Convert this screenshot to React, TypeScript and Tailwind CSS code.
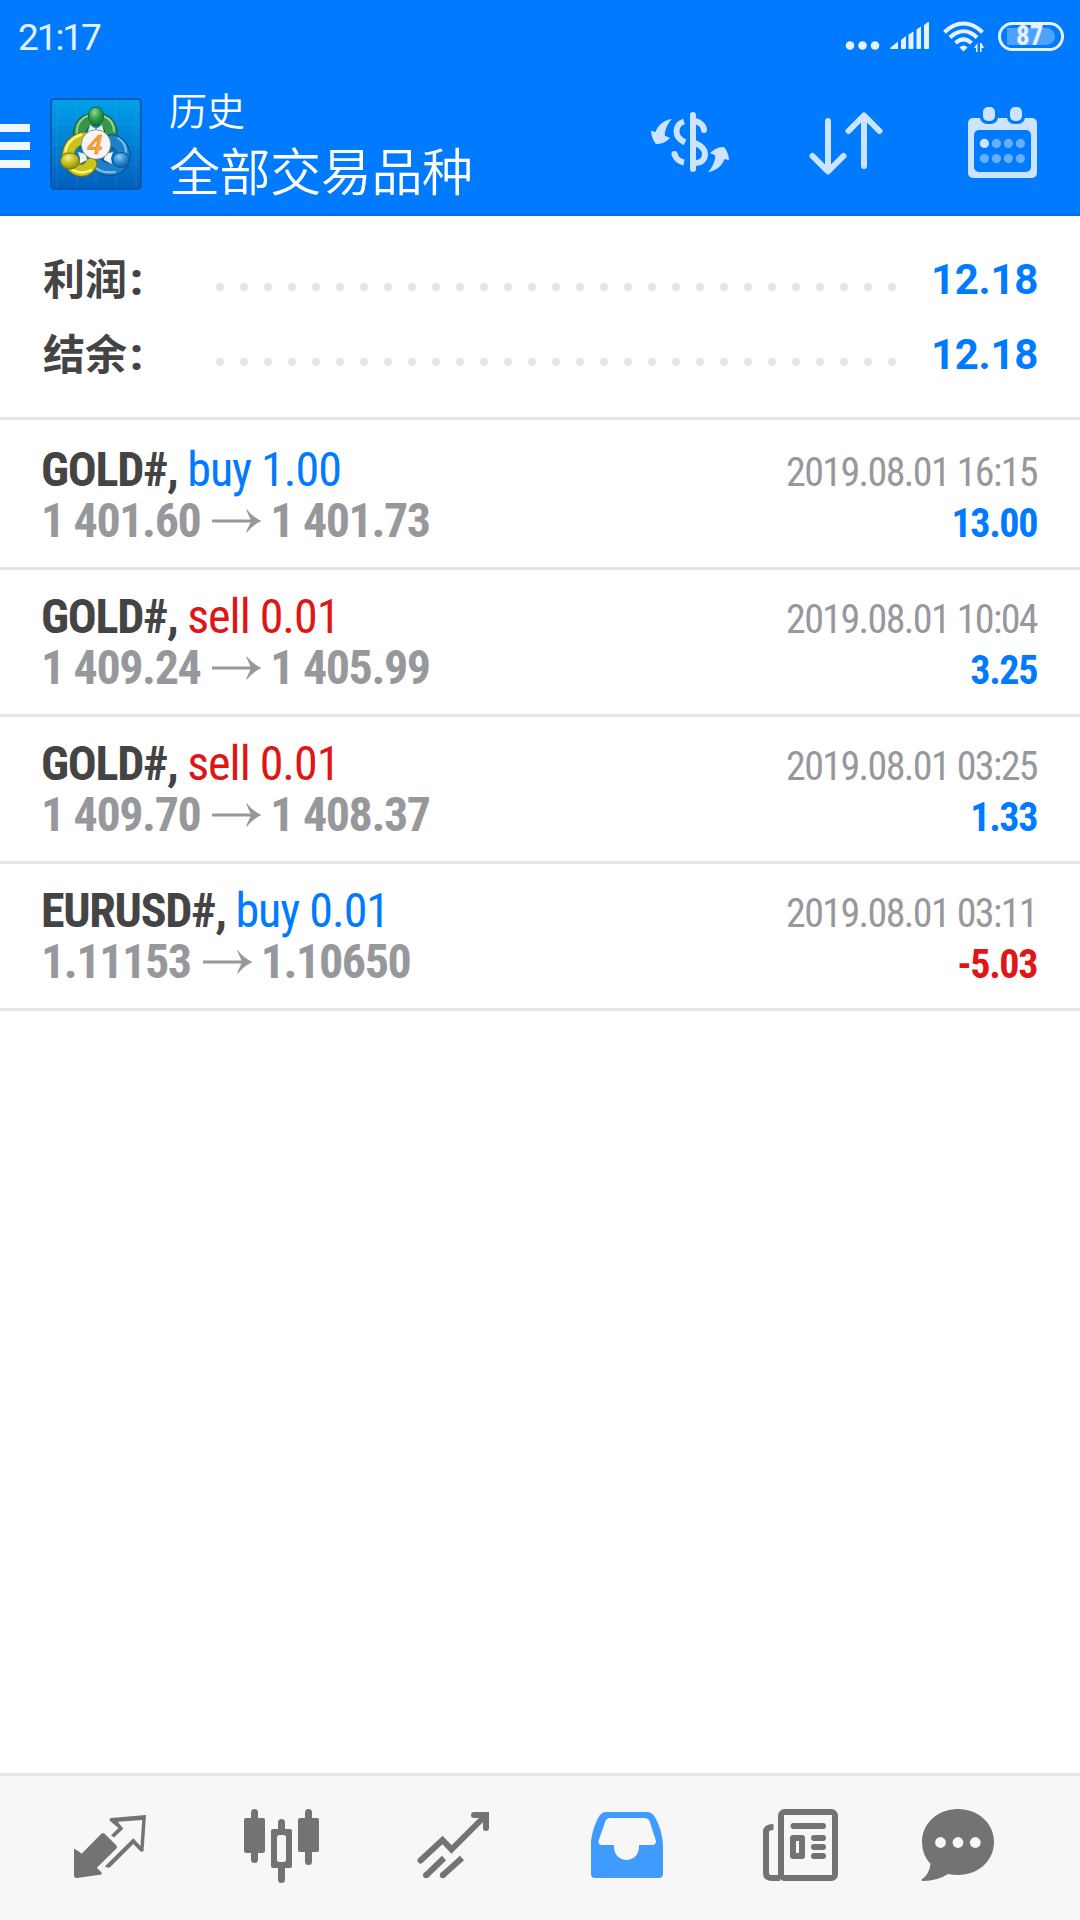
import type { ReactNode } from 'react';

interface Deal {
  symbol: string;
  side: 'buy' | 'sell';
  volume: string;
  open: string;
  close: string;
  time: string;
  profit: string;
}

const summary = [
  { label: '利润', value: '12.18' },
  { label: '结余', value: '12.18' },
];

const deals: Deal[] = [
  { symbol: 'GOLD#', side: 'buy', volume: '1.00', open: '1 401.60', close: '1 401.73', time: '2019.08.01 16:15', profit: '13.00' },
  { symbol: 'GOLD#', side: 'sell', volume: '0.01', open: '1 409.24', close: '1 405.99', time: '2019.08.01 10:04', profit: '3.25' },
  { symbol: 'GOLD#', side: 'sell', volume: '0.01', open: '1 409.70', close: '1 408.37', time: '2019.08.01 03:25', profit: '1.33' },
  { symbol: 'EURUSD#', side: 'buy', volume: '0.01', open: '1.11153', close: '1.10650', time: '2019.08.01 03:11', profit: '-5.03' },
];

function Icon({ children, className = '' }: { children: ReactNode; className?: string }) {
  return (
    <svg viewBox="0 0 100 100" className={`w-[100px] h-[100px] shrink-0 ${className}`}>
      {children}
    </svg>
  );
}

function StatusBar() {
  return (
    <div className="h-[72px] flex items-center justify-between pl-[18px] pr-4 text-[#e5f1ff]">
      <span className="text-[37px] leading-[70px] tracking-[-2.1px] pt-1">21:17</span>
      <div className="flex items-center">
        <svg viewBox="0 0 146 32" className="w-[146px] h-8" fill="currentColor">
          <circle cx="7" cy="25.5" r="4.3" />
          <circle cx="19.5" cy="25.5" r="4.3" />
          <circle cx="32" cy="25.5" r="4.3" />
          {/* signal */}
          <path d="M47 28l8-6.5v7.5h-7q-1 0-1-1zM58 20l5-4v12q0 1-1 1h-3q-1 0-1-1zM65.500 14.500l5-3v16.500q0 1-1 1h-3q-1 0-1-1zM73.500 9.500l4.500-3v21.500q0 1-1 1h-2.500q-1 0-1-1zM81 5l4-3q1-.6 1 .7v25.300q0 1-1 1h-3q-1 0-1-1z" />
          {/* wifi */}
          <g fill="none" stroke="currentColor" strokeWidth="4">
            <path d="M101.500 12.300C113.500 .700 127.500 .700 139.500 12.300" />
            <path d="M107 17.500C115.500 9.300 125.500 9.300 134 17.500" />
            <path d="M112.500 23C118 18 123 18 128.500 23" />
          </g>
          <path d="M116.500 27.500q4-4 8 0l-4 4z" />
          <path d="M134.500 32v-9l-3.500 5h2v4zM137 23v9h1.500v-4h2.500l-2.500-5z" />
        </svg>
        <div className="ml-[9px] w-[66px] h-[29px] rounded-full border-[3px] border-[#e5f1ff] flex items-center justify-center">
          <div className="w-12 h-[17px] rounded-l-sm rounded-r-full bg-[#4ca3ff] flex items-center pl-[9px] font-['Roboto_Condensed','Roboto',sans-serif] text-[27px] font-bold leading-none">
            87
          </div>
        </div>
      </div>
    </div>
  );
}

function AppLogo() {
  return (
    <svg viewBox="0 0 92 92" className="w-[92px] h-[92px]">
      <defs>
        <linearGradient id="tile" x1="0" y1="0" x2="0" y2="1">
          <stop offset="0" stopColor="#00a0ea" />
          <stop offset="1" stopColor="#005fbd" />
        </linearGradient>
        <radialGradient id="green" cx=".4" cy=".3" r=".8">
          <stop offset="0" stopColor="#8fd48f" />
          <stop offset=".5" stopColor="#2f9a4c" />
          <stop offset="1" stopColor="#14702f" />
        </radialGradient>
        <radialGradient id="yellow" cx=".4" cy=".3" r=".8">
          <stop offset="0" stopColor="#f4f08a" />
          <stop offset=".5" stopColor="#c3bb1c" />
          <stop offset="1" stopColor="#7d7d10" />
        </radialGradient>
        <radialGradient id="blue" cx=".4" cy=".3" r=".8">
          <stop offset="0" stopColor="#8ccbf5" />
          <stop offset=".5" stopColor="#2a86cf" />
          <stop offset="1" stopColor="#0a55a0" />
        </radialGradient>
      </defs>
      <rect x="1" y="1" width="90" height="90" rx="3.500" fill="url(#tile)" stroke="#0a4f9c" strokeWidth="1.500" />
      <path d="M7 2v88M27 2v88M46 2v88M66 2v88M86 2v88M2 26h88M2 46h88M2 66h88" stroke="#fff" strokeOpacity=".08" />
      {/* bodies */}
      <g fill="none" strokeLinecap="round">
        <path d="M31 43C26 27 36 21.500 46 21.500S65 27 59 46" stroke="#125c2a" strokeWidth="13.500" />
        <path d="M31 43C26 27 36 21.500 46 21.500S65 27 59 46" stroke="#37964a" strokeWidth="11.500" />
        <path d="M27 36C26 24 34 18 40 17.500M53 18Q64 22 64 33" stroke="#97cf95" strokeWidth="2" />
        <path d="M62 43C75 46 76 61 70 67S49 73 43 61" stroke="#084b92" strokeWidth="14" />
        <path d="M62 43C75 46 76 61 70 67S49 73 43 61" stroke="#1f80ca" strokeWidth="12" />
        <path d="M42 67Q51 76 65 74M68 40Q76 45 76 54" stroke="#7cc3f2" strokeWidth="2" />
        <path d="M34 40C19 43 15 57 21 66S37 74 41 66" stroke="#747000" strokeWidth="13" />
        <path d="M34 40C19 43 15 57 21 66S37 74 41 66" stroke="#cbc31d" strokeWidth="11" />
        <path d="M31 36.500Q17 42 15.500 53M23 72Q32 77 41 72" stroke="#fbf57e" strokeWidth="2.500" />
      </g>
      <path d="M40 27l6 4 6-4 2 7H38zM28 54l8 2 1 6-8 4 1-6zM63 54l-8 2-1 6 8 4-1-6z" fill="#eef4ee" />
      {/* heads */}
      <ellipse cx="46" cy="18" rx="7.500" ry="9" fill="url(#green)" stroke="#12662b" />
      <ellipse cx="20" cy="63" rx="9.500" ry="8" fill="url(#yellow)" stroke="#777410" />
      <ellipse cx="71" cy="62" rx="8.500" ry="7.500" fill="url(#blue)" stroke="#0a559f" />
      <circle cx="46" cy="46.500" r="14.800" fill="#f6f6f8" stroke="#666" strokeWidth=".7" />
      <text x="45" y="56" textAnchor="middle" fontSize="27" fontFamily="Open Sans, sans-serif" fontStyle="italic" fontWeight="600" fill="#fba62c" stroke="#e8702e" strokeWidth=".5">
        4
      </text>
    </svg>
  );
}

function Toolbar() {
  return (
    <div className="h-[144px] flex items-start border-b-[3px] border-[#0070e8]">
      <div className="w-[30px] mt-[52px] flex flex-col gap-[10px]">
        <div className="h-2 bg-[#f0f7ff]" />
        <div className="h-2 bg-[#f0f7ff]" />
        <div className="h-2 bg-[#f0f7ff]" />
      </div>
      <div className="ml-5 mt-[26px]">
        <AppLogo />
      </div>
      <div className="ml-[27px] mt-[15px] flex-1 text-white font-[350]">
        <div className="text-[38px] leading-[50px]">历史</div>
        <div className="text-[51px] leading-[73px] tracking-[-0.4px]">全部交易品种</div>
      </div>
      <div className="flex gap-[56px] pr-7 mt-6 text-[#cce4ff]">
        <Icon>
          <rect x="50" y="16" width="6" height="60" rx="3" fill="currentColor" />
          <g fill="none" stroke="currentColor" strokeWidth="6">
            <path d="M55 25C60 26 64 30 64 34" strokeLinecap="round" />
            <path d="M55 47C62 50 65 53 65 58C65 64 61 67 55 67" />
            <path d="M44 25.500C39 27 36.500 30 36.500 35.500C36.500 40.500 40 44 45 46.500" />
            <path d="M34.500 58C36 63 39 65.500 44 66.500" />
          </g>
          <circle cx="34.500" cy="58" r="3" fill="currentColor" />
          <path id="swap" d="M32 23C24 24 18 29 15.500 36L11 34.700C11 39 13 44 15.500 47.500Q16.500 48.500 19 47.800C23 47.500 27 45 30 42L24.700 39.500C25 33 28 27 32 23Z" fill="currentColor" />
          <use href="#swap" transform="rotate(180 50 49.500)" />
        </Icon>
        <Icon>
          <g fill="none" stroke="currentColor" strokeWidth="6" strokeLinecap="round" strokeLinejoin="round">
            <path d="M32 25V75M16.500 60L32 75.500L47.500 60" />
            <path d="M68 70V20M52.500 35L68 19.500L83.500 35" />
          </g>
        </Icon>
        <Icon>
          <rect x="16" y="22" width="69" height="60" rx="5" fill="currentColor" />
          <rect x="22" y="34" width="57" height="42" rx="5" fill="#007aff" />
          <rect x="28" y="8" width="18" height="20" rx="7" fill="#007aff" />
          <rect x="55" y="8" width="18" height="20" rx="7" fill="#007aff" />
          <rect x="31" y="11" width="12" height="14" rx="5" fill="currentColor" />
          <rect x="58" y="11" width="12" height="14" rx="5" fill="currentColor" />
          <circle cx="32.400" cy="47.400" r="4.600" fill="currentColor" />
          <g fill="#66afff">
            <circle cx="44.400" cy="47.400" r="4.600" />
            <circle cx="56.400" cy="47.400" r="4.600" />
            <circle cx="68.400" cy="47.400" r="4.600" />
            <circle cx="32.400" cy="62.600" r="4.600" />
            <circle cx="44.400" cy="62.600" r="4.600" />
            <circle cx="56.400" cy="62.600" r="4.600" />
            <circle cx="68.400" cy="62.600" r="4.600" />
          </g>
        </Icon>
      </div>
    </div>
  );
}

function SummaryRow({ label, value }: { label: string; value: string }) {
  return (
    <div className="h-[75px] flex items-center leading-[75px] text-[42px]">
      <span className="w-[173px] font-bold text-[#444] pt-px">
        {label}
        <span className="ml-[3px] text-[44px] leading-none font-black">:</span>
      </span>
      <div className="flex gap-4 pt-[15px]">
        {Array.from({ length: 29 }, (_, i) => (
          <span key={i} className="size-2 rounded-full bg-[#e5e5e5]" />
        ))}
      </div>
      <span className="ml-auto font-bold tracking-[-0.3px] text-[#007aff]">{value}</span>
    </div>
  );
}

function DealRow({ deal }: { deal: Deal }) {
  const sideColor = deal.side === 'buy' ? 'text-[#007aff]' : 'text-[#e01616]';
  const profitColor = deal.profit.startsWith('-') ? 'text-[#e01616]' : 'text-[#007aff]';

  return (
    <div className="h-[147px] border-b-[3px] border-[#e4e4e4] pl-[41px] pr-[43px] flex justify-between font-['Roboto_Condensed','Roboto',sans-serif] leading-[51px]">
      <div className="pt-[21px] text-[48px] tracking-[-1.4px]">
        <div className="font-bold text-[#444] tracking-[-1.3px]">
          {deal.symbol},{' '}
          <span className={`font-normal tracking-[-1px] ${sideColor}`}>
            {deal.side} {deal.volume}
          </span>
        </div>
        <div className="flex items-center font-bold text-[#97989c]">
          {deal.open}
          <svg viewBox="0 0 50 24" className="w-[50px] h-6 ml-3 mr-2 mt-px" fill="currentColor">
            <path d="M0 10.500H38.500L34.500 1.500V0Q40.500 8 49.500 12Q40.500 16 34.500 24V22L38.500 13.500H0Z" />
          </svg>
          {deal.close}
        </div>
      </div>
      <div className="pt-6 text-[40px] text-right">
        <div className="text-[#97989c] tracking-[-1.6px]">{deal.time}</div>
        <div className={`font-bold tracking-[-1.4px] ${profitColor}`}>{deal.profit}</div>
      </div>
    </div>
  );
}

function BottomNav() {
  return (
    <nav className="h-[147px] border-t-[3px] border-[#e4e4e4] bg-[#f7f7f7] flex gap-[73px] pl-[60px] pt-6 text-[#737373]">
      {/* quotes */}
      <Icon>
        <g fill="currentColor">
          <path d="M14 48.700Q18 50 21.600 53.700L41.600 33.500Q43 32.300 44.500 33.500L56.500 45.500Q57.500 47 56.500 48.500L36.800 67.700L41.600 72.500V74.500L17 78Q14 78 14 75.500Z" />
          <path d="M86 15L51 18Q48.500 18.800 50 21L58.500 28L51 35.300L54 37.500L63.300 28.700L57.800 21.700L82.200 20L80.500 46L73.300 38.300L45 66.300Q47.500 68.500 50 67.300L73.300 44L80.500 51.500Q83 52 83.600 50.700Z" />
        </g>
      </Icon>
      {/* charts */}
      <Icon>
        <g fill="currentColor">
          <rect x="11" y="18" width="21" height="35" rx="2" />
          <rect x="18" y="9" width="7" height="54" rx="3.500" />
          <rect x="38" y="29" width="21" height="39" rx="2" />
          <rect x="45" y="19" width="7" height="64" rx="3.500" />
          <rect x="65" y="18" width="21" height="34" rx="2" />
          <rect x="72" y="9" width="7" height="56" rx="3.500" />
        </g>
        <rect x="44" y="35" width="9" height="27" rx="2.500" fill="#f7f7f7" />
      </Icon>
      {/* trade */}
      <Icon>
        <g fill="none" stroke="currentColor" strokeWidth="6">
          <path d="M14.500 60.500L36.500 40L45.500 49.500L80 15M68 15H80V28" strokeLinecap="round" />
          <path d="M20 75.500L38 58M36.500 75.500L56 58" />
        </g>
        <circle cx="20" cy="75.300" r="3" fill="currentColor" />
        <circle cx="36.800" cy="75.300" r="3" fill="currentColor" />
      </Icon>
      {/* history */}
      <Icon className="text-[#409bff]">
        <path
          fill="currentColor"
          fillRule="evenodd"
          d="M12 45C12 33 18 18 22 14Q24 12 27 12H69Q72 12 74 14.500C80 22 84 36 84 46V74Q84 78 80 78H16Q12 78 12 74ZM31 18Q28 18 26.500 21L19.500 41Q19 45 23 45H35V47C35 55 41 60 47.500 60S60 55 60 47V45H73Q77 45 77 41L70.500 21Q69 18 65 18Z"
        />
      </Icon>
      {/* news */}
      <Icon>
        <g fill="none" stroke="currentColor" strokeWidth="6">
          <rect x="29" y="12" width="54" height="66" rx="3.500" />
          <path d="M21.500 27Q14 27 14 32V73Q14 78 20 78H28" />
          <rect x="41" y="38" width="9" height="18" strokeLinejoin="round" />
          <path d="M41.500 26H71M62 38H71M62 47H71M62 56H71" strokeLinecap="round" />
        </g>
      </Icon>
      {/* messages */}
      <Icon className="-ml-[14px]">
        <path d="M47 9C67 9 83 23 83 42S67 75 47 75Q42 75 37 74Q26 81 12.500 81Q10 81 11 79Q18 75 19.500 64Q11 55 11 42C11 23 27 9 47 9Z" fill="currentColor" />
        <g fill="#f7f7f7">
          <circle cx="29.500" cy="42.500" r="5.400" />
          <circle cx="47" cy="42.500" r="5.400" />
          <circle cx="64.300" cy="42.500" r="5.400" />
        </g>
      </Icon>
    </nav>
  );
}

export default function App() {
  return (
    <div className="w-[1080px] h-[1920px] flex flex-col bg-white overflow-hidden font-['Roboto','Noto_Sans_CJK_SC',sans-serif]">
      <header className="bg-[#007aff]">
        <StatusBar />
        <Toolbar />
      </header>
      <section className="h-[204px] pt-[26px] pl-[43px] pr-[42px] border-b-[3px] border-[#e4e4e4]">
        {summary.map((row) => (
          <SummaryRow key={row.label} label={row.label} value={row.value} />
        ))}
      </section>
      <main className="flex-1 pt-[3px]">
        {deals.map((deal) => (
          <DealRow key={deal.time} deal={deal} />
        ))}
      </main>
      <BottomNav />
    </div>
  );
}
